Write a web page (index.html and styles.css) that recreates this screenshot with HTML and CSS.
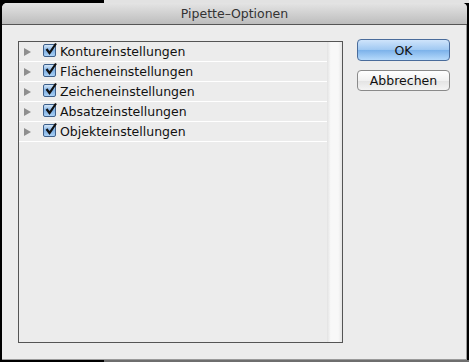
FILE: index.html
```html
<!DOCTYPE html>
<html lang="de">
<head>
    <meta charset="UTF-8">
    <title>Pipette-Optionen</title>
    <link rel="stylesheet" href="styles.css">
</head>
<body>
<div class="window">
    <div class="titlebar">Pipette–Optionen</div>

    <div class="content">
        <div class="listbox">
            <div class="rows">
                <div class="row"><span class="disclosure"></span><span class="check"><svg viewBox="0 0 13 13" width="13" height="13"><path d="M2.5 6 L5.5 10 L12 0.5" fill="none" stroke="#111" stroke-width="2.2"/></svg></span>Kontureinstellungen</div>
                <div class="row"><span class="disclosure"></span><span class="check"><svg viewBox="0 0 13 13" width="13" height="13"><path d="M2.5 6 L5.5 10 L12 0.5" fill="none" stroke="#111" stroke-width="2.2"/></svg></span>Flächeneinstellungen</div>
                <div class="row"><span class="disclosure"></span><span class="check"><svg viewBox="0 0 13 13" width="13" height="13"><path d="M2.5 6 L5.5 10 L12 0.5" fill="none" stroke="#111" stroke-width="2.2"/></svg></span>Zeicheneinstellungen</div>
                <div class="row"><span class="disclosure"></span><span class="check"><svg viewBox="0 0 13 13" width="13" height="13"><path d="M2.5 6 L5.5 10 L12 0.5" fill="none" stroke="#111" stroke-width="2.2"/></svg></span>Absatzeinstellungen</div>
                <div class="row"><span class="disclosure"></span><span class="check"><svg viewBox="0 0 13 13" width="13" height="13"><path d="M2.5 6 L5.5 10 L12 0.5" fill="none" stroke="#111" stroke-width="2.2"/></svg></span>Objekteinstellungen</div>
            </div>
            <div class="scrollbar"></div>
        </div>

        <div class="buttons">
            <button class="btn btn-default">OK</button>
            <button class="btn">Abbrechen</button>
        </div>
    </div>
</div>
</body>
</html>
```

FILE: styles.css
```css
html, body {
    margin: 0;
    padding: 0;
    height: 100%;
}

body {
    font-family: 'DejaVu Sans', sans-serif;
    font-size: 12.5px;
    color: #111;
    background:
        linear-gradient(to right, #000 104px, #e2e2e2 104px) top / 100% 3px no-repeat,
        linear-gradient(to right, #000 104px, #6e6e6e 104px) bottom / 100% 2px no-repeat,
        #000;
    padding: 3px 2px 0 2px;
    box-sizing: border-box;
}

.window {
    width: 465px;
    height: 357px;
    background-color: #ececec;
    border-radius: 5px 5px 0 0;
    box-shadow: inset -1px -1px 0 #9a9a9a;
    display: flex;
    flex-direction: column;
    overflow: hidden;
}

.titlebar {
    height: 21px;
    line-height: 21px;
    text-align: center;
    color: #333;
    font-size: 12.5px;
    background: linear-gradient(to bottom, #e4e4e4, #bdbdbd);
    border-bottom: 1px solid #555;
}

.content {
    display: flex;
    padding: 16px 17px 0 16px;
}

.listbox {
    width: 324px;
    height: 300px;
    border: 1px solid #555;
    display: flex;
    background-color: #ececec;
}

.rows {
    flex: 1;
}

.row {
    height: 19px;
    border-bottom: 1px solid #fff;
    display: flex;
    align-items: center;
    line-height: 19px;
}

.disclosure {
    width: 0;
    height: 0;
    border-left: 7px solid #8e8e8e;
    border-top: 4px solid transparent;
    border-bottom: 4px solid transparent;
    margin-left: 5px;
    margin-right: 12px;
}

.check {
    width: 11px;
    height: 11px;
    border: 1px solid #3d5f8a;
    border-radius: 2px;
    background: linear-gradient(to bottom, #d4e6f8, #7fb0e4 50%, #a9d0f5);
    margin-right: 4px;
    position: relative;
    top: -1px;
}

.check svg {
    display: block;
    overflow: visible;
    margin: -2px 0 0 0;
}

.scrollbar {
    width: 15px;
    background: linear-gradient(to right, #e2e2e2, #f8f8f8 25%, #f8f8f8 75%, #e6e6e6);
}

.buttons {
    display: flex;
    flex-direction: column;
    margin-left: 14px;
    margin-top: -2px;
}

.btn {
    width: 93px;
    height: 21px;
    font-family: 'DejaVu Sans', sans-serif;
    font-size: 12.5px;
    color: #111;
    border: 1px solid #8a8a8a;
    border-radius: 4px;
    background: linear-gradient(to bottom, #fff, #f1f1f1 50%, #e3e3e3 51%, #f4f4f4);
    padding: 0;
    margin-bottom: 9px;
}

.btn-default {
    height: 22px;
    border-color: #4a6c9b;
    background: linear-gradient(to bottom, #cfe4fb, #9fc8f2 50%, #7cb2ea 51%, #b6dafb);
}
```
